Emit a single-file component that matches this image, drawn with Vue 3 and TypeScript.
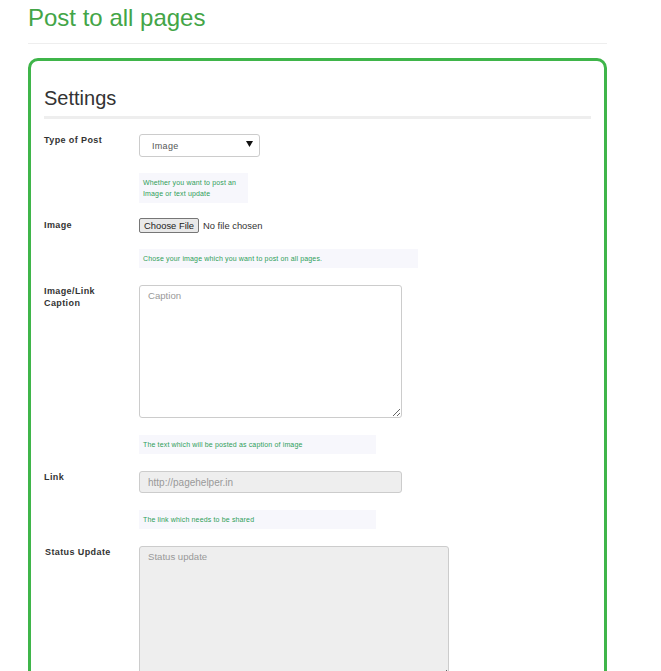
<script setup lang="ts">
interface Hint { text: string; width: number }
const typeOptions: string[] = ['Image', 'Text']
const hints: Record<string, Hint> = {
  type: { text: 'Whether you want to post an Image or text update', width: 109 },
  image: { text: 'Chose your image which you want to post on all pages.', width: 279 },
  caption: { text: 'The text which will be posted as caption of image', width: 237 },
  link: { text: 'The link which needs to be shared', width: 237 },
}
</script>

<template>
  <main class="page">
    <h1 class="title">Post to all pages</h1>
    <section class="card">
      <h2 class="card-title">Settings</h2>

      <div class="row">
        <label class="label">Type of Post</label>
        <div class="field">
          <div class="select-wrap">
            <select class="select">
              <option v-for="o in typeOptions" :key="o">{{ o }}</option>
            </select>
            <svg class="arrow" width="7" height="6" viewBox="0 0 7 6"><path d="M0 0H7L3.5 6Z" fill="#111" /></svg>
          </div>
          <p class="hint hint-type" :style="{ width: hints.type.width + 'px' }">{{ hints.type.text }}</p>
        </div>
      </div>

      <div class="row">
        <label class="label">Image</label>
        <div class="field">
          <input class="file" type="file" />
          <p class="hint hint-file" :style="{ width: hints.image.width + 'px' }">{{ hints.image.text }}</p>
        </div>
      </div>

      <div class="row">
        <label class="label">Image/Link Caption</label>
        <div class="field">
          <textarea class="control area caption" placeholder="Caption"></textarea>
          <p class="hint" :style="{ width: hints.caption.width + 'px' }">{{ hints.caption.text }}</p>
        </div>
      </div>

      <div class="row">
        <label class="label">Link</label>
        <div class="field">
          <input class="control link" type="text" placeholder="http://pagehelper.in" disabled />
          <p class="hint" :style="{ width: hints.link.width + 'px' }">{{ hints.link.text }}</p>
        </div>
      </div>

      <div class="row">
        <label class="label label-status">Status Update</label>
        <div class="field">
          <textarea class="control area status" placeholder="Status update" disabled></textarea>
        </div>
      </div>
    </section>
  </main>
</template>

<style>
html, body { overflow: hidden; background: #fff; }
</style>

<style scoped>
.page {
  width: 579px;
  margin-left: 28px;
  font-family: "Liberation Sans", Arial, sans-serif;
}
.title {
  margin: 0;
  height: 44px;
  box-sizing: border-box;
  padding-top: 4px;
  font-size: 24px;
  line-height: 27px;
  font-weight: 400;
  color: #43a547;
  border-bottom: 1px solid #eee;
}
.card {
  margin-top: 14px;
  box-sizing: border-box;
  border: 3px solid #3fb54a;
  border-radius: 10px;
  padding: 25px 13px 40px;
}
.card-title {
  margin: 0 0 15px;
  height: 33px;
  box-sizing: border-box;
  font-size: 20px;
  line-height: 24px;
  font-weight: 400;
  color: #333;
  border-bottom: 3px solid #eee;
}
.row {
  display: grid;
  grid-template-columns: 95px 1fr;
}
.label {
  font-size: 9px;
  line-height: 12px;
  font-weight: 700;
  letter-spacing: 0.4px;
  color: #333;
  padding-right: 20px;
}
.label-status { padding-left: 1px; padding-right: 0; }
.field { display: flex; flex-direction: column; align-items: flex-start; }
.select-wrap { position: relative; width: 121px; height: 23px; }
.select {
  appearance: none;
  width: 100%;
  height: 100%;
  box-sizing: border-box;
  border: 1px solid #ccc;
  border-radius: 3px;
  background: #fff;
  padding: 0 12px;
  font: 9px "Liberation Sans", Arial, sans-serif;
  letter-spacing: 0.3px;
  color: #555;
}
.arrow { position: absolute; right: 7px; top: 7px; pointer-events: none; }
.hint {
  margin: 17px 0;
  box-sizing: border-box;
  padding: 4px;
  background: #f7f7fc;
  font-size: 7px;
  line-height: 11px;
  letter-spacing: 0.15px;
  color: #2f9e5a;
}
.hint-type { margin: 16px 0; }
.file {
  display: block;
  height: 18px;
  margin-top: -1px;
  font-family: "Liberation Sans", Arial, sans-serif;
  font-size: 9.4px;
  line-height: 14px;
  color: #333;
}
.file::file-selector-button {
  height: 15px;
  box-sizing: border-box;
  margin: 0 4px 0 0;
  padding: 0 4px;
  border: 1px solid #767676;
  border-radius: 2px;
  background: #e9e9e9;
  font-family: "Liberation Sans", Arial, sans-serif;
  font-size: 9.4px;
  color: #222;
}
.hint-file { margin-top: 13px; }
.control {
  box-sizing: border-box;
  display: block;
  margin: 0;
  border: 1px solid #ccc;
  border-radius: 3px;
  padding: 4px 8px;
  background: #fff;
  font: 10px/13px "Liberation Sans", Arial, sans-serif;
  color: #555;
}
.area { font-size: 9.6px; padding-top: 3px; }
.control::placeholder { color: #999; opacity: 1; }
.control:disabled { background: #eee; }
.caption { width: 263px; height: 133px; }
.link { width: 263px; height: 22px; }
.status { width: 310px; height: 133px; }
</style>
